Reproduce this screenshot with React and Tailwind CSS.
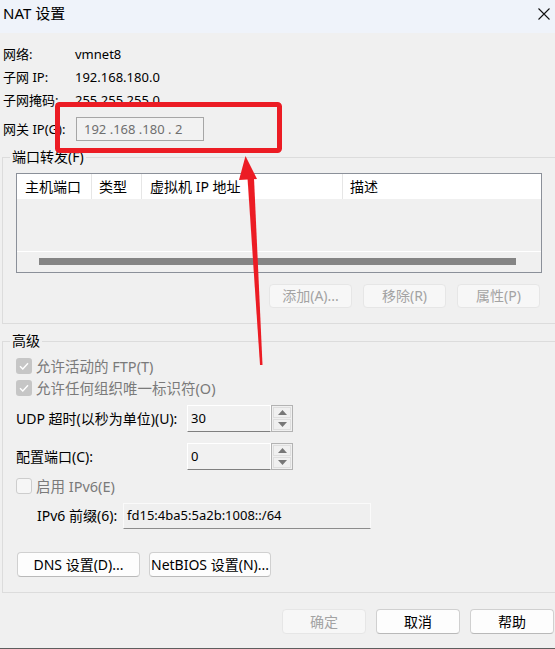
import React from 'react';

// NAT 设置 dialog (VMware Virtual Network Editor) with a red annotation on top

function Btn({ children, disabled, className = '' }) {
  return (
    <div
      className={
        'flex items-center justify-center rounded-[4px] border text-[14px] leading-[18px] ' +
        (disabled
          ? 'border-[#e6e6e6] bg-[#f7f7f7] text-[#a3a3a3] '
          : 'border-[#d0d0d0] border-b-[#b9b9b9] bg-[#fdfdfd] text-black ') +
        className
      }
    >
      {children}
    </div>
  );
}

function Check({ checked, children }) {
  return (
    <div className="flex items-center h-[16px]">
      {checked ? (
        <div className="w-[16px] h-[16px] rounded-[3px] bg-[#c6c6c6] flex items-center justify-center">
          <svg width="10" height="8" viewBox="0 0 10 8">
            <path d="M1 4.2 L3.8 7 L9 1.2" fill="none" stroke="#fff" strokeWidth="1.4" />
          </svg>
        </div>
      ) : (
        <div className="w-[16px] h-[16px] rounded-[3px] border border-[#cdcdcd] bg-[#f6f6f6]" />
      )}
      <span className="ml-[4px] text-[14.5px] leading-[18px] text-[#7a7a7a]">{children}</span>
    </div>
  );
}

function Spin({ value }) {
  return (
    <div className="flex h-[27px]">
      <div className="w-[84px] h-[27px] bg-[#f1f1f1] border border-white border-b-[#7f7f7f] pl-[3px] pb-[2px] flex items-center text-[13px] leading-[18px]">
        {value}
      </div>
      <div className="w-[22px] h-[27px] border border-[#b3b3b3] p-[1px] flex flex-col gap-[1px]">
        <div className="flex-1 border border-[#dedede] bg-[#f0f0f0] flex items-center justify-center">
          <svg width="9" height="5" viewBox="0 0 9 5">
            <path d="M0 5 L4.5 0 L9 5 Z" fill="#777" />
          </svg>
        </div>
        <div className="flex-1 border border-[#dedede] bg-[#f0f0f0] flex items-center justify-center">
          <svg width="9" height="5" viewBox="0 0 9 5">
            <path d="M0 0 L4.5 5 L9 0 Z" fill="#777" />
          </svg>
        </div>
      </div>
    </div>
  );
}

export default function App() {
  return (
    <div className="relative w-[555px] h-[649px] overflow-hidden bg-[#f0f0f0] text-black border-b border-[#5e5e5e] font-['Noto_Sans','Noto_Sans_CJK_SC',sans-serif]">
      {/* 标题栏 */}
      <div className="h-[33px] bg-[#eff3fa] flex items-start justify-between pl-[3px] pr-[5px] pt-[3px]">
        <span className="text-[15px] leading-[20px]">NAT 设置</span>
        <svg width="12" height="12" viewBox="0 0 12 12" className="mt-[5px]">
          <path d="M0.5 0.5 L11.5 11.5 M11.5 0.5 L0.5 11.5" stroke="#111" strokeWidth="1.1" />
        </svg>
      </div>

      {/* 基本信息 */}
      <div className="pl-[3px] pt-[9px] text-[13px] leading-[18px]">
        <div className="flex items-center h-[23px]">
          <span className="w-[72px]">网络:</span>
          <span>vmnet8</span>
        </div>
        <div className="flex items-center h-[23px]">
          <span className="w-[72px]">子网 IP:</span>
          <span>192.168.180.0</span>
        </div>
        <div className="flex items-center h-[23px]">
          <span className="w-[72px]">子网掩码:</span>
          <span>255.255.255.0</span>
        </div>
        <div className="flex items-center h-[24px] mt-[6px]">
          <span className="w-[73px]">网关 IP(G):</span>
          <div className="w-[128px] h-[24px] border border-[#a6a6a6] bg-[#f2f2f2] pl-[7px] flex items-center text-[#6f6f6f]">
            192 .168 .180 . 2
          </div>
        </div>
      </div>

      {/* 端口转发 */}
      <fieldset className="mt-[7px] ml-[2px] w-[570px] border border-[#dcdcdc]">
        <legend className="ml-[7px] px-[2px] text-[14px] leading-[18px]">端口转发(F)</legend>
        <div className="pl-[13px] pt-[7px] pb-[15px]">
          <div className="w-[526px] h-[100px] border border-[#8b9099] flex flex-col">
            <div className="h-[25px] bg-white flex text-[14px] leading-[18px]">
              <div className="w-[75px] pl-[8px] flex items-center border-r border-[#e6e6e6]">主机端口</div>
              <div className="w-[50px] pl-[7px] flex items-center border-r border-[#e6e6e6]">类型</div>
              <div className="w-[201px] pl-[8px] flex items-center border-r border-[#e6e6e6]">虚拟机 IP 地址</div>
              <div className="flex-1 pl-[7px] flex items-center">描述</div>
            </div>
            <div className="flex-1" />
            <div className="h-[1px] bg-white" />
            <div className="h-[20px] pt-[6px] pl-[22px]">
              <div className="w-[477px] h-[7px] bg-[#858585]" />
            </div>
          </div>
          <div className="w-[526px] mt-[11px] pr-[2px] flex justify-end gap-[11px]">
            <Btn disabled className="w-[83px] h-[24px]">添加(A)...</Btn>
            <Btn disabled className="w-[83px] h-[24px]">移除(R)</Btn>
            <Btn disabled className="w-[83px] h-[24px]">属性(P)</Btn>
          </div>
        </div>
      </fieldset>

      {/* 高级 */}
      <fieldset className="mt-[8px] ml-[2px] w-[570px] border border-[#dcdcdc]">
        <legend className="ml-[7px] px-[2px] text-[14px] leading-[18px]">高级</legend>
        <div className="pl-[13px] pt-[8px] pb-[15px] text-[14px] leading-[18px]">
          <Check checked>允许活动的 FTP(T)</Check>
          <div className="mt-[6px]">
            <Check checked>允许任何组织唯一标识符(O)</Check>
          </div>
          <div className="mt-[9px] flex items-center">
            <span className="w-[171px]">UDP 超时(以秒为单位)(U):</span>
            <Spin value="30" />
          </div>
          <div className="mt-[11px] flex items-center">
            <span className="w-[171px]">配置端口(C):</span>
            <Spin value="0" />
          </div>
          <div className="mt-[8px]">
            <Check>启用 IPv6(E)</Check>
          </div>
          <div className="mt-[9px] pl-[21px] flex items-center">
            <span className="w-[86px]">IPv6 前缀(6):</span>
            <div className="w-[248px] h-[26px] bg-[#efefef] border border-[#fafafa] border-b-[#8c8c8c] pl-[3px] pb-[2px] flex items-center text-[13px]">
              fd15:4ba5:5a2b:1008::/64
            </div>
          </div>
          <div className="mt-[23px] pl-[1px] flex gap-[9px]">
            <Btn className="w-[123px] h-[25px] text-[13px]">DNS 设置(D)...</Btn>
            <Btn className="w-[122px] h-[25px] text-[13px]">NetBIOS 设置(N)...</Btn>
          </div>
        </div>
      </fieldset>

      {/* 底部按钮 */}
      <div className="mt-[16px] pr-[1px] flex justify-end gap-[10px]">
        <Btn disabled className="w-[84px] h-[25px]">确定</Btn>
        <Btn className="w-[84px] h-[25px]">取消</Btn>
        <Btn className="w-[84px] h-[25px]">帮助</Btn>
      </div>

      {/* 红色标注 */}
      <svg className="absolute inset-0 pointer-events-none" width="555" height="649" viewBox="0 0 555 649">
        <rect x="57.5" y="104.5" width="222" height="46" rx="2" fill="none" stroke="#ec1c24" strokeWidth="5" />
        <polygon points="245.5,156 239,180 257,179" fill="#ec1c24" />
        <polygon points="247.5,178 254,178 262.5,365 260,365" fill="#ec1c24" />
      </svg>
    </div>
  );
}
